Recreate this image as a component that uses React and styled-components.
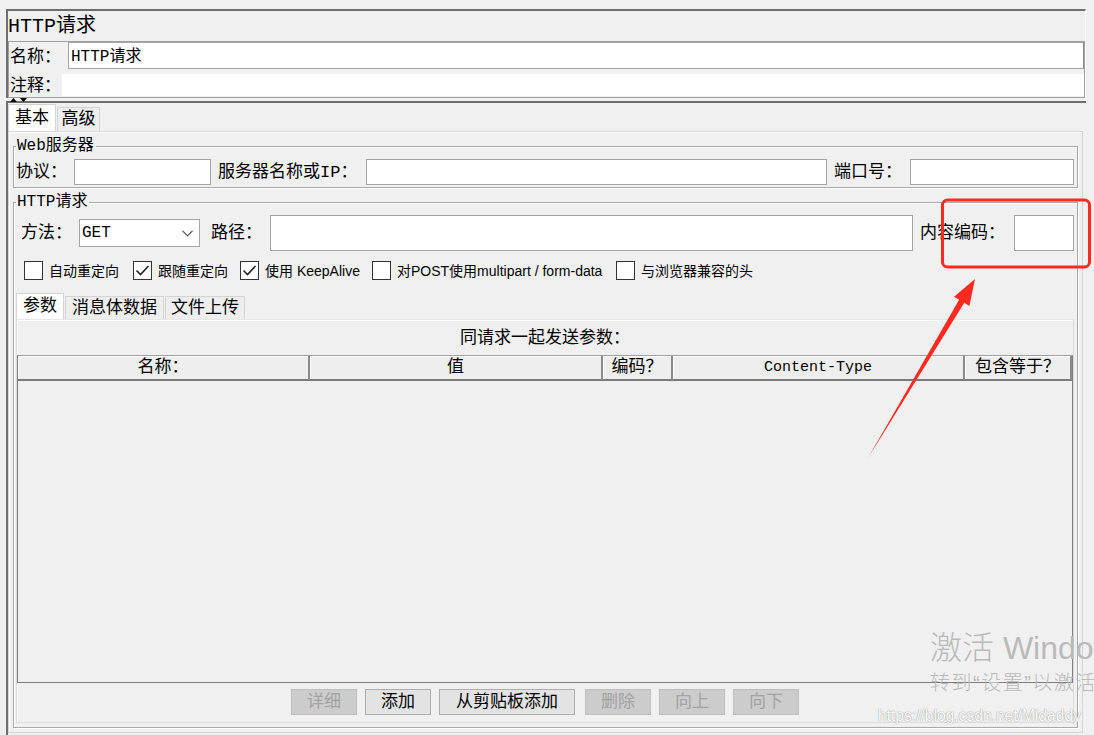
import React from 'react';
import styled, { createGlobalStyle } from 'styled-components';

const SWING = `"Liberation Mono", "Noto Sans CJK SC", monospace`;
const SANS = `"Liberation Sans", "Noto Sans CJK SC", sans-serif`;

const GlobalStyle = createGlobalStyle`
  html, body { margin: 0; padding: 0; background: #f0f0f0; }
  body { font-family: ${SWING}; color: #000; }
  * { box-sizing: border-box; }
`;

const Page = styled.div`
  position: relative;
  width: 1094px;
  height: 735px;
  overflow: hidden;
  background: #f0f0f0;
  padding: 9px 8px 0 6px;
  font-size: 17px;
  line-height: 17px;
`;

const TopPanel = styled.section`
  width: 1080px;
  border-top: 2px solid #6e6e6e;
  border-left: 2px solid #6e6e6e;
  border-right: 1px solid #ffffff;
`;

const Title = styled.div`
  height: 30px;
  padding-top: 1px;
  font-size: 20px;
  line-height: 30px;
  white-space: nowrap;
`;

const NameBox = styled.div`
  display: flex;
  flex-direction: column;
  border: 1px solid #a0a0a0;
  height: 57px;
`;

const FieldRow = styled.div`
  display: flex;
  align-items: center;
  height: 28px;
`;

const RowLabel = styled.span`
  flex: none;
  width: ${(p) => p.$w}px;
  padding-left: 1px;
  padding-top: ${(p) => p.$pt}px;
  white-space: nowrap;
`;

const NameInput = styled.div`
  flex: 1;
  align-self: flex-start;
  height: 27px;
  background: #fff;
  border: 1px solid #a5a5a5;
  border-right-color: #8c8c8c;
  padding: 2px 0 0 2px;
  font-size: 16px;
  line-height: 24px;
  white-space: nowrap;
`;

const NoteArea = styled.div`
  flex: 1;
  align-self: flex-end;
  height: 22px;
  margin-bottom: 1px;
  background: #fff;
`;

const Splitter = styled.div`
  display: flex;
  align-items: center;
  height: 3px;
  padding-left: 4px;
`;

const BottomPanel = styled.section`
  width: 1080px;
  border-top: 2px solid #6e6e6e;
  border-left: 2px solid #6e6e6e;
  padding-top: 1px;
  height: 640px;
`;

const TabStrip = styled.div`
  display: flex;
  align-items: flex-end;
  height: ${(p) => p.$h}px;
  margin-top: ${(p) => p.$mt || 0}px;
`;

const Tab = styled.div`
  flex: none;
  width: ${(p) => p.$w}px;
  height: ${(p) => (p.$active ? p.$h : p.$h - 3)}px;
  display: flex;
  align-items: center;
  justify-content: center;
  background: ${(p) => (p.$active ? '#ffffff' : '#eeeeee')};
  border: 1px solid #d4d4d4;
  border-bottom: none;
  margin-right: 1px;
  white-space: nowrap;
`;

const TabPanel = styled.div`
  width: 1075px;
  border: 1px solid #d6d6d6;
  box-shadow: inset 1px 1px 0 #ffffff;
  padding: 6px 4px 4px 4px;
`;

const Group = styled.fieldset`
  margin: ${(p) => p.$mt}px 0 0 0;
  padding: 5px 0 ${(p) => p.$pb}px 2px;
  border: 1px solid #a9a9a9;
  box-shadow: inset 1px 1px 0 #ffffff, 1px 1px 0 #ffffff;
  min-width: 0;
`;

const Legend = styled.legend`
  padding: 0 2px 0 1px;
  margin: 0;
  font-size: 16px;
  line-height: 16px;
  white-space: nowrap;
`;

const GridRow = styled.div`
  display: grid;
  grid-template-columns: ${(p) => p.$cols};
  align-items: center;
  height: ${(p) => p.$h}px;
  margin-left: ${(p) => p.$ml || 0}px;
  margin-top: ${(p) => p.$mt || 0}px;
`;

const CellLabel = styled.span`
  padding-left: ${(p) => p.$pl || 0}px;
  white-space: nowrap;
`;

const TextBox = styled.div`
  height: ${(p) => p.$h}px;
  background: #fff;
  border: 1px solid #a5a5a5;
`;

const Select = styled.div`
  height: 28px;
  background: #fff;
  border: 1px solid #a5a5a5;
  display: flex;
  align-items: center;
  justify-content: space-between;
  padding: 0 6px 0 2px;
  font-size: 16px;
`;

const CheckItem = styled.label`
  display: flex;
  align-items: center;
  gap: 6px;
  font-family: ${SANS};
  font-size: 14px;
  line-height: 18px;
  white-space: nowrap;
`;

const Box = styled.span`
  flex: none;
  width: 19px;
  height: 19px;
  background: #fff;
  border: 1px solid #333333;
  display: flex;
  align-items: center;
  justify-content: center;
`;

const SubPanel = styled.div`
  margin-right: 3px;
  border: 1px solid #dcdcdc;
  border-top-color: #e6e6e6;
  box-shadow: inset 1px 1px 0 #ffffff;
  padding-bottom: 7px;
`;

const Caption = styled.div`
  height: 35px;
  padding-top: 3px;
  line-height: 32px;
  text-align: center;
  white-space: nowrap;
`;

const Table = styled.div`
  width: 1056px;
  height: 328px;
  border: 1px solid #7d7d7d;
  border-top-color: #a0a0a0;
`;

const HeadRow = styled.div`
  display: grid;
  grid-template-columns: 292px 293px 70px 292px 107px;
  height: 25px;
`;

const HeadCell = styled.div`
  display: flex;
  align-items: center;
  justify-content: center;
  background: #eeeeee;
  border-right: 2px solid #8a8a8a;
  border-bottom: 2px solid #7a7a7a;
  box-shadow: inset 1px 1px 0 #ffffff;
  font-size: ${(p) => p.$fs || 17}px;
  white-space: nowrap;
`;

const ButtonRow = styled.div`
  display: flex;
  justify-content: center;
  gap: 8px;
  margin-top: 6px;
  height: 26px;
`;

const Button = styled.div`
  width: ${(p) => p.$w}px;
  height: 26px;
  margin-right: ${(p) => p.$mr || 0}px;
  display: flex;
  align-items: center;
  justify-content: center;
  background: ${(p) => (p.$disabled ? '#cccccc' : '#e3e3e3')};
  border: 1px solid ${(p) => (p.$disabled ? '#bdbdbd' : '#adadad')};
  color: ${(p) => (p.$disabled ? '#a2a2a2' : '#000000')};
  white-space: nowrap;
`;

const Overlay = styled.svg`
  position: absolute;
  left: 0;
  top: 0;
  pointer-events: none;
`;

const Watermark = styled.div`
  position: absolute;
  left: 930px;
  top: 628px;
  color: #bababa;
  font-family: "Liberation Sans", "Noto Sans CJK SC", sans-serif;
  font-weight: 300;
  white-space: nowrap;
  pointer-events: none;
`;

const WmBig = styled.div`
  font-size: 32px;
  line-height: 40px;
`;

const WmSmall = styled.div`
  font-size: 20px;
  line-height: 26px;
  margin-top: 2px;
  letter-spacing: 1.5px;
`;

const Blog = styled.div`
  position: absolute;
  left: 878px;
  top: 707px;
  font-family: ${SANS};
  font-size: 15.6px;
  line-height: 17px;
  color: #ffffff;
  text-shadow: 0 0 1px #9a9a9a, 0 0 1px #9a9a9a;
  white-space: nowrap;
  pointer-events: none;
`;

const Check = () => (
  <svg width="15" height="13" viewBox="0 0 15 13">
    <polyline points="1.5,6.5 5.5,10.5 13.5,2" fill="none" stroke="#222" strokeWidth="1.6" />
  </svg>
);

const CheckBox = ({ checked, children }) => (
  <CheckItem>
    <Box>{checked && <Check />}</Box>
    {children}
  </CheckItem>
);

export default function App() {
  return (
    <Page>
      <GlobalStyle />
      <TopPanel>
        <Title>HTTP请求</Title>
        <NameBox>
          <FieldRow>
            <RowLabel $w={59} $pt={4}>名称：</RowLabel>
            <NameInput>HTTP请求</NameInput>
          </FieldRow>
          <FieldRow>
            <RowLabel $w={53} $pt={6}>注释：</RowLabel>
            <NoteArea />
          </FieldRow>
        </NameBox>
      </TopPanel>
      <Splitter>
        <svg width="18" height="6" viewBox="0 0 18 6">
          <polygon points="0,5 3.5,1 7,5" fill="#000" />
          <polygon points="10,1 17,1 13.5,5" fill="#000" />
        </svg>
      </Splitter>
      <BottomPanel>
        <TabStrip $h={27}>
          <Tab $active $w={48} $h={27}>基本</Tab>
          <Tab $w={43} $h={27}>高级</Tab>
        </TabStrip>
        <TabPanel>
          <Group $mt={0} $pb={2}>
            <Legend>Web服务器</Legend>
            <GridRow $cols="58px 137px 155px 461px 83px 164px" $h={26}>
              <CellLabel>协议：</CellLabel>
              <TextBox $h={26} />
              <CellLabel $pl={7}>服务器名称或IP：</CellLabel>
              <TextBox $h={26} />
              <CellLabel $pl={7}>端口号：</CellLabel>
              <TextBox $h={26} />
            </GridRow>
          </Group>
          <Group $mt={6} $pb={4}>
            <Legend>HTTP请求</Legend>
            <GridRow $cols="58px 121px 70px 643px 101px 60px" $h={36} $ml={5}>
              <CellLabel>方法：</CellLabel>
              <Select>
                <span>GET</span>
                <svg width="11" height="7" viewBox="0 0 11 7">
                  <polyline points="0.5,0.8 5.5,5.8 10.5,0.8" fill="none" stroke="#444" strokeWidth="1.1" />
                </svg>
              </Select>
              <CellLabel $pl={11}>路径：</CellLabel>
              <TextBox $h={36} />
              <CellLabel $pl={7}>内容编码：</CellLabel>
              <TextBox $h={36} />
            </GridRow>
            <GridRow $cols="109px 107px 132px 244px auto" $h={19} $ml={8} $mt={10}>
              <CheckBox>自动重定向</CheckBox>
              <CheckBox checked>跟随重定向</CheckBox>
              <CheckBox checked>使用 KeepAlive</CheckBox>
              <CheckBox>对POST使用multipart / form-data</CheckBox>
              <CheckBox>与浏览器兼容的头</CheckBox>
            </GridRow>
            <TabStrip $h={26} $mt={13}>
              <Tab $active $w={48} $h={26}>参数</Tab>
              <Tab $w={99} $h={26}>消息体数据</Tab>
              <Tab $w={80} $h={26}>文件上传</Tab>
            </TabStrip>
            <SubPanel>
              <Caption>同请求一起发送参数：</Caption>
              <Table>
                <HeadRow>
                  <HeadCell>名称：</HeadCell>
                  <HeadCell>值</HeadCell>
                  <HeadCell>编码？</HeadCell>
                  <HeadCell $fs={15}>Content-Type</HeadCell>
                  <HeadCell>包含等于？</HeadCell>
                </HeadRow>
              </Table>
              <ButtonRow>
                <Button $w={66} $disabled>详细</Button>
                <Button $w={66}>添加</Button>
                <Button $w={136} $mr={2}>从剪贴板添加</Button>
                <Button $w={66} $disabled>删除</Button>
                <Button $w={66} $disabled>向上</Button>
                <Button $w={66} $disabled>向下</Button>
              </ButtonRow>
            </SubPanel>
          </Group>
        </TabPanel>
      </BottomPanel>

      <Watermark>
        <WmBig>激活 Windows</WmBig>
        <WmSmall>转到“设置”以激活Windows。</WmSmall>
      </Watermark>
      <Blog>https://blog.csdn.net/Midaddy</Blog>

      <Overlay width="1094" height="735" viewBox="0 0 1094 735">
        <rect x="942.5" y="200" width="147" height="67" rx="5" fill="none" stroke="#ff2a1f" strokeWidth="3" />
        <polygon
          points="868,458 959.1,299.8 954,296.7 975,279 969.4,305.9 964.3,302.8"
          fill="#ff2a1f"
        />
      </Overlay>
    </Page>
  );
}
